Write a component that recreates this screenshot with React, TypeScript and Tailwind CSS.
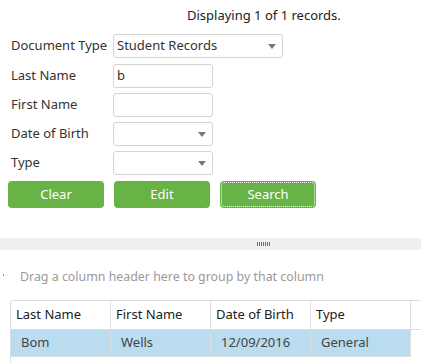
import React from "react";

const font = { fontFamily: '"Noto Sans", "Open Sans", sans-serif' };

function Arrow() {
  return (
    <svg width="8" height="5" viewBox="0 0 8 5" className="absolute right-[6px] top-[9px]">
      <path d="M0 0 L8 0 L4 5 Z" fill="#777" />
    </svg>
  );
}

function Row({ label, children }: { label: string; children: React.ReactNode }) {
  return (
    <div className="flex items-center h-6">
      <div className="w-[113px] shrink-0 pl-[11px] whitespace-nowrap text-[13px] text-[#333]">{label}</div>
      {children}
    </div>
  );
}

function Input({ value = "", select = false, wide = false }: { value?: string; select?: boolean; wide?: boolean }) {
  return (
    <div
      className={`relative shrink-0 h-6 border border-[#d4d4d4] rounded-[3px] bg-white flex items-center px-[3px] text-[13px] text-[#333] ${
        wide ? "w-[170px]" : "w-[100px]"
      }`}
    >
      {value}
      {select && <Arrow />}
    </div>
  );
}

export default function App() {
  return (
    <div className="w-[421px] h-[363px] bg-white overflow-hidden" style={font}>
      {/* header count */}
      <div className="pt-[6px] pl-[187px] h-[34px] text-[13px] text-[#222]">Displaying 1 of 1 records.</div>

      {/* search form */}
      <div className="flex flex-col gap-[5px]">
        <Row label="Document Type">
          <Input value="Student Records" select wide />
        </Row>
        <div className="h-[1px] -mt-[5px]" />
        <Row label="Last Name">
          <Input value="b" />
        </Row>
        <Row label="First Name">
          <Input />
        </Row>
        <Row label="Date of Birth">
          <Input select />
        </Row>
        <Row label="Type">
          <Input select />
        </Row>
        <div className="flex gap-[10px] pl-[8px] mt-[1px]">
          <button className="w-[96px] h-[27px] rounded-[4px] bg-[#67b346] text-white text-[13px]">Clear</button>
          <button className="w-[96px] h-[27px] rounded-[4px] bg-[#67b346] text-white text-[13px]">Edit</button>
          <button className="w-[96px] h-[27px] rounded-[4px] bg-[#67b346] text-white text-[13px] outline-1 outline-dotted outline-white -outline-offset-2">
            Search
          </button>
        </div>
      </div>

      {/* splitter */}
      <div className="mt-[30px] h-[12px] bg-[#efefef] flex items-center pl-[257px]">
        <div className="flex gap-[1px]">
          {[0, 1, 2, 3, 4, 5, 6].map((i) => (
            <div key={i} className="w-[1px] h-[4px] bg-[#6b6b6b]" />
          ))}
        </div>
      </div>

      {/* group panel */}
      <div className="relative h-[50px] flex items-center pt-[4px] pl-[20px] text-[12.4px] text-[#9a9a9a]">
        <div className="absolute left-[3px] top-[24px] w-[1px] h-[2px] bg-[#6aa6c8]" />
        Drag a column header here to group by that column
      </div>

      {/* grid */}
      <div className="ml-[10px] border-t border-l border-[#dedede] rounded-tl-[3px] h-[70px]">
        <div className="flex h-[29px] border-b border-[#dedede] text-[13px] text-[#222]">
          {["Last Name", "First Name", "Date of Birth", "Type"].map((h) => (
            <div key={h} className="w-[100px] border-r border-[#dedede] flex items-center pl-[5px]">
              {h}
            </div>
          ))}
        </div>
        <div className="flex h-[27px] w-[400px] bg-[#b9ddef] border-b border-[#dedede] text-[13px] text-[#444]">
          {["Bom", "Wells", "12/09/2016", "General"].map((c) => (
            <div key={c} className="w-[100px] border-r border-[#dedede] flex items-center pl-[10px]">
              {c}
            </div>
          ))}
        </div>
      </div>
    </div>
  );
}
